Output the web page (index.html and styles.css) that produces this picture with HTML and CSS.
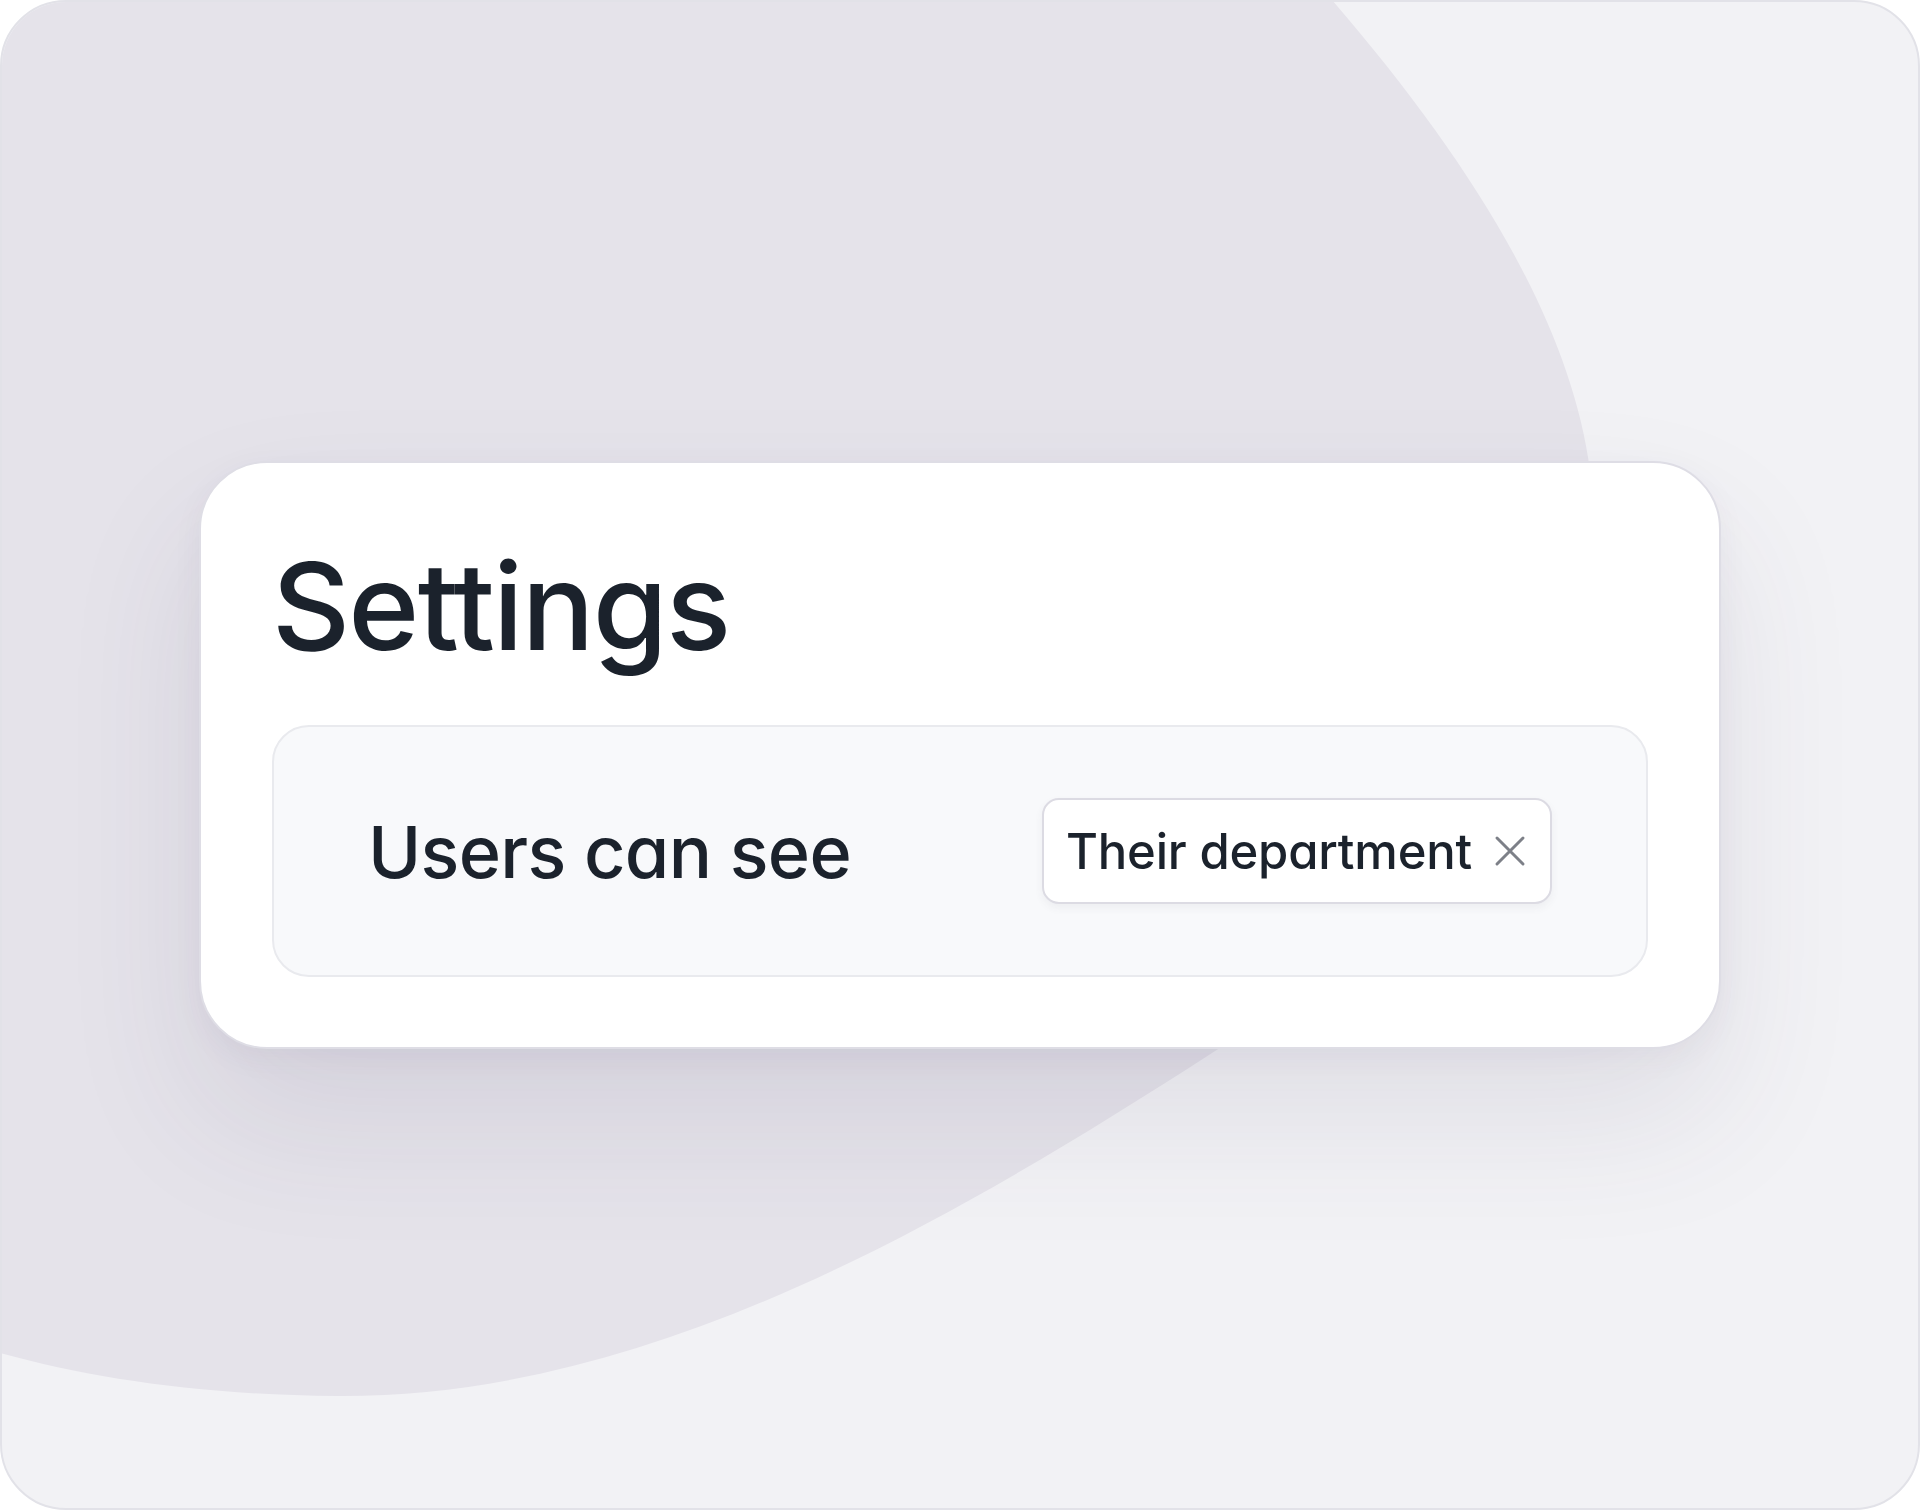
FILE: index.html
```html
<!DOCTYPE html>
<html lang="en">
<head>
  <meta charset="UTF-8" />
  <meta name="viewport" content="width=device-width, initial-scale=1.0" />
  <title>Settings</title>
  <link rel="stylesheet" href="styles.css">
</head>
<body>
  <div class="frame">
    <!-- background blob -->
    <svg class="blob" viewBox="0 0 1920 1510" preserveAspectRatio="none">
      <path d="M0,0 L1332,0 C1470,160 1570,320 1590,470 C1610,700 1450,900 1212,1053 C930,1235 640,1398 337,1396 C200,1395 90,1378 0,1353 Z" fill="#e5e3ea" />
    </svg>

    <div class="card">
      <h1 class="title">Settings</h1>
      <div class="panel">
        <span class="label">Users can see</span>
        <div class="chip">
          <span>Their department</span>
          <svg class="chip-x" viewBox="0 0 32 32">
            <path d="M3 3 L29 29 M29 3 L3 29" stroke="#7d8088" stroke-width="3" stroke-linecap="round" fill="none" />
          </svg>
        </div>
      </div>
    </div>
  </div>
</body>
</html>
```

FILE: styles.css
```css
html, body {
  margin: 0;
  padding: 0;
  background: #ffffff;
}
body {
  font-family: Inter, "Noto Sans", sans-serif;
  font-feature-settings: "cv11";
  color: #1b222c;
}

.frame {
  position: relative;
  width: 1920px;
  height: 1510px;
  box-sizing: border-box;
  border: 2px solid #e2e2e8;
  border-radius: 66px;
  background: #f2f2f5;
  overflow: hidden;
  display: flex;
  align-items: center;
  justify-content: center;
}
.blob {
  position: absolute;
  left: -2px;
  top: -2px;
  width: 1920px;
  height: 1510px;
}

.card {
  position: relative;
  width: 1522px;
  height: 588px;
  box-sizing: border-box;
  padding: 73px 71px 70px;
  background: #ffffff;
  border: 2px solid #dedde5;
  border-radius: 68px;
  box-shadow: 0 70px 140px rgba(70, 60, 100, 0.10), 0 10px 30px rgba(70, 60, 100, 0.05);
  display: flex;
  flex-direction: column;
  justify-content: flex-end;
}
.title {
  margin: 0 0 auto 0;
  padding-left: 0;
  font-size: 121px;
  font-weight: 500;
  letter-spacing: -1.8px;
  line-height: 140px;
}

.panel {
  height: 252px;
  box-sizing: border-box;
  background: #f8f9fb;
  border: 2px solid #e9eaee;
  border-radius: 37px;
  display: flex;
  align-items: center;
  justify-content: space-between;
  padding: 0 94px 0 94px;
}
.label {
  font-size: 72px;
  font-weight: 500;
  letter-spacing: -0.7px;
}
.chip {
  height: 106px;
  box-sizing: border-box;
  display: flex;
  align-items: center;
  gap: 22px;
  padding: 0 24px 0 22px;
  background: #ffffff;
  border: 2px solid #dcdbe3;
  border-radius: 17px;
  box-shadow: 0 4px 8px rgba(60, 60, 90, 0.06);
  font-size: 49px;
  font-weight: 500;
  letter-spacing: -0.2px;
}
.chip-x {
  width: 32px;
  height: 32px;
}
```
